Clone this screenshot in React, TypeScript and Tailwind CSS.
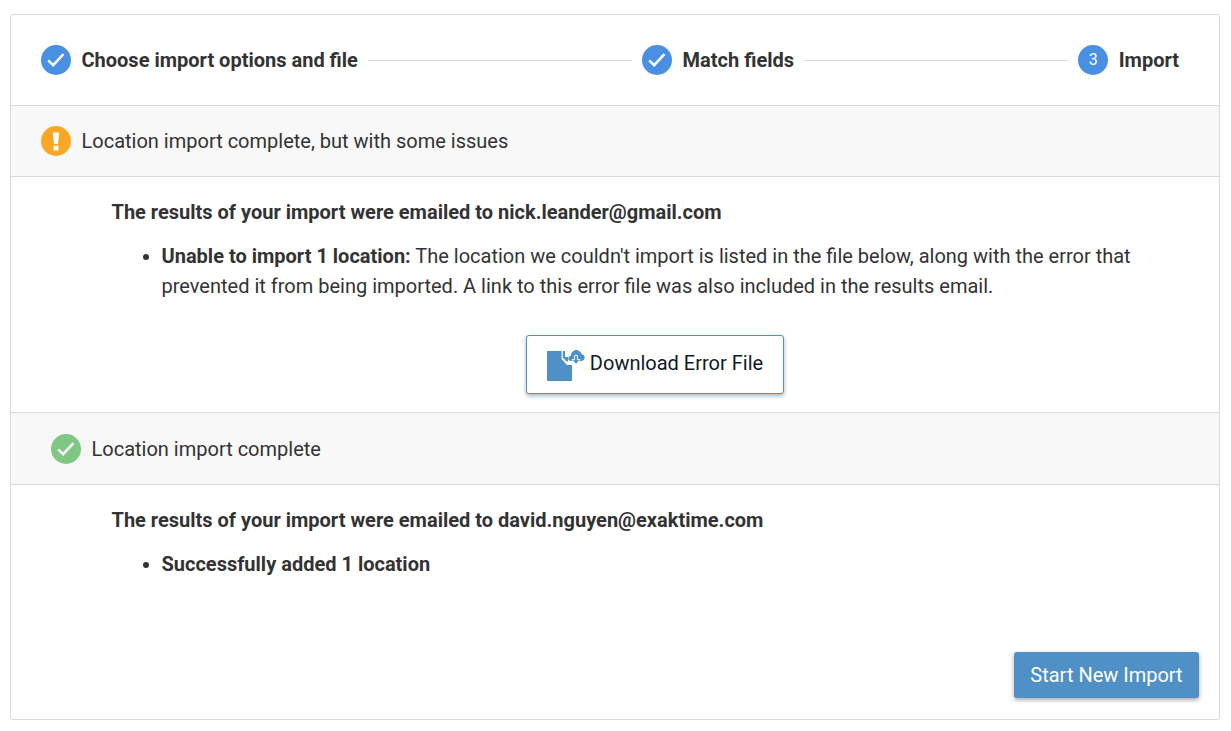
import React from "react";

const Check = () => (
  <svg width="30" height="30" viewBox="0 0 30 30" aria-hidden="true">
    <path d="M7.2 15.4 L12.2 20.2 L22.4 9.2" fill="none" stroke="#fff" strokeWidth="2.5" />
  </svg>
);

const Step = ({ label, children, line }: { label: string; children: React.ReactNode; line?: boolean }) => (
  <>
    <div className="flex items-center shrink-0">
      <span className="flex h-[30px] w-[30px] items-center justify-center rounded-full bg-[#4a90e2] text-[16px] text-white">
        {children}
      </span>
      <span className="ml-[10.5px] text-[20px] font-bold leading-[30px] text-[#333333]">{label}</span>
    </div>
    {line && <div className="mx-[10px] mt-px h-px flex-1 bg-[#d9d9d9]" />}
  </>
);

const DownloadIcon = () => (
  <svg width="38" height="32" viewBox="0 0 38 32" aria-hidden="true">
    <path d="M0 2 H14.6 V10 L20 16 H25 V32 H0 Z" fill="#4f90c6" />
    <path d="M15.8 2 H18 V8 H21 V12.4 H19.6 L15.8 8.6 Z" fill="#4f90c6" />
    <path d="M24 12 C20.6 12 20.4 7.4 23.6 7 C24 2.4 29 -0.8 32.4 2.2 C34 3 34.6 4.4 34.6 5.2 C38.6 5.4 38.8 11.6 34.6 12 Z" fill="#4f90c6" />
    <path d="M27.6 6.4 H30.4 V10.6 H33 L29 15.4 L25 10.6 H27.6 Z" fill="#4f90c6" stroke="#fff" strokeWidth="0.9" />
  </svg>
);

export default function App() {
  return (
    <div className="min-h-[731px] bg-white pl-[10px] pr-[11px] pt-[14px] font-['Roboto',sans-serif] text-[#333333]">
      <div className="flex h-[706px] flex-col rounded-[3px] border border-[#d9d9d9]">
        <div className="flex h-[91px] items-center border-b border-[#d9d9d9] pl-[30px] pr-[40px]">
          <Step label="Choose import options and file" line>
            <Check />
          </Step>
          <Step label="Match fields" line>
            <Check />
          </Step>
          <Step label="Import">3</Step>
        </div>

        <div className="flex h-[71px] items-center border-b border-[#d9d9d9] bg-[#f8f8f8] pl-[30px]">
          <span className="flex h-[30px] w-[30px] items-center justify-center rounded-full bg-[#f9a825]">
            <svg width="30" height="30" viewBox="0 0 30 30" aria-hidden="true">
              <path d="M11.8 6.6 H18.2 L17 18 H13 Z M12.6 19.8 H17.4 V24.4 H12.6 Z" fill="#fff" />
            </svg>
          </span>
          <span className="ml-[10.5px] text-[20px] leading-[30px]">Location import complete, but with some issues</span>
        </div>

        <div className="h-[236px] border-b border-[#d9d9d9] pl-[100.5px] pt-[20px]">
          <p className="text-[20px] font-bold leading-[30px]">The results of your import were emailed to nick.leander@gmail.com</p>
          <ul className="mt-[14px] list-disc pl-[50px] pr-[70px] text-[20px] leading-[30px]">
            <li>
              <span className="font-bold">Unable to import 1 location:</span> The location we couldn't import is listed in the file below, along with the error that prevented it from being imported. A link to this error file was also included in the results email.
            </li>
          </ul>
          <div className="mt-[34px] flex justify-start pl-[414.5px]">
            <button className="flex h-[59px] w-[258px] items-center justify-center rounded-[3px] border border-[#4f90c6] bg-white text-[20px] text-[#111827] shadow-[0_2px_4px_rgba(0,0,0,0.3)]">
              <DownloadIcon />
              <span className="mb-1 ml-[5px]">Download Error File</span>
            </button>
          </div>
        </div>

        <div className="flex h-[72px] items-center border-b border-[#d9d9d9] bg-[#f8f8f8] pl-[40px]">
          <span className="flex h-[30px] w-[30px] items-center justify-center rounded-full bg-[#81c784]">
            <Check />
          </span>
          <span className="ml-[10.5px] text-[20px] leading-[30px]">Location import complete</span>
        </div>

        <div className="flex flex-1 flex-col pl-[100.5px] pt-[20px]">
          <p className="text-[20px] font-bold leading-[30px]">The results of your import were emailed to david.nguyen@exaktime.com</p>
          <ul className="mt-[14px] list-disc pl-[50px] text-[20px] leading-[30px]">
            <li className="font-bold">Successfully added 1 location</li>
          </ul>
          <div className="mt-auto flex justify-end pb-[21px] pr-[20px]">
            <button className="h-[46px] w-[185px] rounded-[3px] bg-[#4f90c6] text-[20px] text-white shadow-[0_2px_4px_rgba(0,0,0,0.35)]">
              Start New Import
            </button>
          </div>
        </div>
      </div>
    </div>
  );
}
